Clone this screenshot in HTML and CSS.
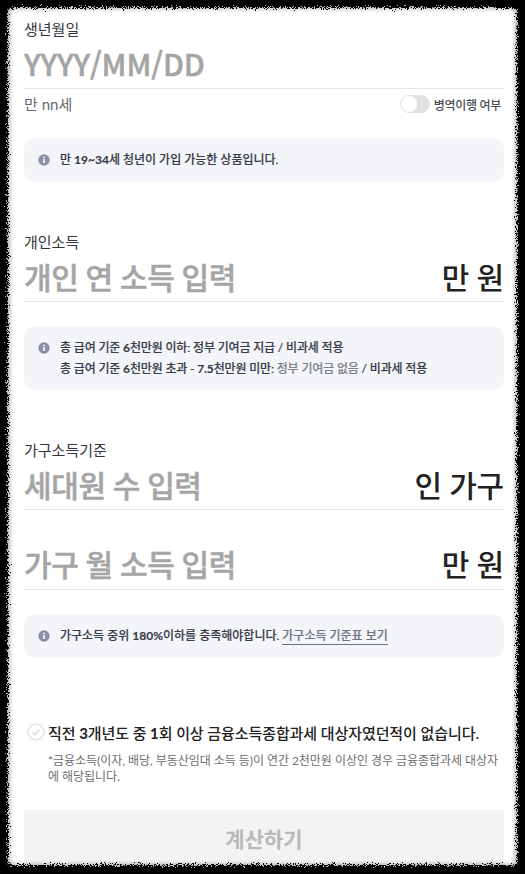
FILE: index.html
```html
<!DOCTYPE html>
<html lang="ko">
<head>
<meta charset="utf-8">
<title>계산하기</title>
<link rel="stylesheet" href="styles.css">
</head>
<body>
<main class="page">
  <section class="section section-birth">
    <div class="label">생년월일</div>
    <div class="field"><span class="placeholder latin">YYYY/MM/DD</span></div>
    <div class="age-row">
      <span class="age">만 nn세</span>
      <span class="toggle-wrap"><span class="toggle"><span class="knob"></span></span><span class="toggle-label">병역이행 여부</span></span>
    </div>
    <div class="info info-one">
      <svg class="info-icon" viewBox="0 0 12 12"><circle cx="6" cy="6" r="5.7" fill="#8b90a5"/><circle cx="6" cy="3.4" r="0.95" fill="#f3f5f9"/><rect x="5.1" y="5" width="1.8" height="4" fill="#f3f5f9"/></svg>
      <p class="info-text">만 <b class="num">19~34</b>세 청년이 가입 가능한 상품입니다.</p>
    </div>
  </section>

  <section class="section section-income">
    <div class="label">개인소득</div>
    <div class="field"><span class="placeholder">개인 연 소득 입력</span><span class="unit">만 원</span></div>
    <div class="info info-two">
      <svg class="info-icon" viewBox="0 0 12 12"><circle cx="6" cy="6" r="5.7" fill="#8b90a5"/><circle cx="6" cy="3.4" r="0.95" fill="#f3f5f9"/><rect x="5.1" y="5" width="1.8" height="4" fill="#f3f5f9"/></svg>
      <div class="info-text tight">
        <p>총 급여 기준 <b class="num">6</b>천만원 이하: 정부 기여금 지급 / 비과세 적용</p>
        <p>총 급여 기준 <b class="num">6</b>천만원 초과 - <b class="num">7.5</b>천만원 미만: <span class="muted">정부 기여금 없음</span> / 비과세 적용</p>
      </div>
    </div>
  </section>

  <section class="section section-house">
    <div class="label">가구소득기준</div>
    <div class="field"><span class="placeholder">세대원 수 입력</span><span class="unit">인 가구</span></div>
    <div class="field field-second"><span class="placeholder">가구 월 소득 입력</span><span class="unit">만 원</span></div>
    <div class="info info-three">
      <svg class="info-icon" viewBox="0 0 12 12"><circle cx="6" cy="6" r="5.7" fill="#8b90a5"/><circle cx="6" cy="3.4" r="0.95" fill="#f3f5f9"/><rect x="5.1" y="5" width="1.8" height="4" fill="#f3f5f9"/></svg>
      <p class="info-text">가구소득 중위 <b class="num">180%</b>이하를 충족해야합니다. <a class="link">가구소득 기준표 보기</a></p>
    </div>
  </section>

  <section class="agree">
    <div class="agree-row">
      <svg class="check" viewBox="0 0 18 18"><circle cx="9" cy="9" r="8" fill="#fff" stroke="#e6e6e6" stroke-width="1.6"/><path d="M5.4 9.2l2.6 2.6 4.6-5" fill="none" stroke="#dcdcdc" stroke-width="1.5"/></svg>
      <span class="agree-text">직전 <b class="num">3</b>개년도 중 <b class="num">1</b>회 이상 금융소득종합과세 대상자였던적이 없습니다.</span>
    </div>
    <p class="note">*금융소득(이자, 배당, 부동산임대 소득 등)이 연간 2천만원 이상인 경우 금융종합과세 대상자에 해당됩니다.</p>
  </section>

  <button class="submit" type="button">계산하기</button>
</main>

<svg class="frame" width="525" height="874" viewBox="0 0 525 874">
  <defs>
    <filter id="soft" x="-5%" y="-5%" width="110%" height="110%">
      <feGaussianBlur stdDeviation="2"/>
    </filter>
    <filter id="rough" x="-5%" y="-5%" width="110%" height="110%" color-interpolation-filters="sRGB">
      <feTurbulence type="fractalNoise" baseFrequency="1.1" numOctaves="2" seed="4" result="n"/>
      <feGaussianBlur in="SourceGraphic" stdDeviation="0.6" result="b"/>
      <feDisplacementMap in="b" in2="n" scale="11" xChannelSelector="R" yChannelSelector="G"/>
    </filter>
  </defs>
  <path filter="url(#soft)" opacity="0.3" fill-rule="evenodd" fill="#000" d="M-20-20H545V894H-20Z M14 9H511a4 4 0 0 1 4 4V860a4 4 0 0 1-4 4H14a4 4 0 0 1-4-4V13a4 4 0 0 1 4-4Z"/>
  <path filter="url(#rough)" fill-rule="evenodd" fill="#000" d="M-20-20H545V894H-20Z M13 8H513a4 4 0 0 1 4 4V861a4 4 0 0 1-4 4H12a4 4 0 0 1-4-4V12a4 4 0 0 1 5-4Z"/>
</svg>
</body>
</html>
```

FILE: styles.css
```css
* { box-sizing: border-box; }
html, body { margin: 0; padding: 0; background: #fff; }
body {
  width: 525px;
  height: 874px;
  overflow: hidden;
  position: relative;
  font-family: Lato, "Noto Sans CJK KR", sans-serif;
  color: #2b2b2b;
}
p { margin: 0; }
.page { padding: 19px 21px 0 24px; }
.section-income { margin-top: 51px; }
.section-house { margin-top: 51px; }
.label { font-size: 15px; line-height: 20px; color: #33363d; }
.field {
  display: flex;
  justify-content: space-between;
  align-items: center;
  height: 50px;
  padding-bottom: 1px;
  border-bottom: 1px solid #e6e6e8;
}
.field-second { margin-top: 30px; padding-bottom: 3px; }
.placeholder { font-size: 30px; font-weight: 500; color: #a5a5a5; letter-spacing: -0.4px; -webkit-text-stroke: 0.5px #a5a5a5; }
.latin { font-family: "Noto Sans CJK KR", sans-serif; font-size: 30px; letter-spacing: -0.1px; }
.unit { font-size: 30px; font-weight: 500; color: #222; letter-spacing: -0.2px; }
.age-row { display: flex; justify-content: space-between; align-items: center; height: 30px; }
.age { font-size: 15px; color: #66696f; padding-bottom: 2px; }
.toggle-wrap { display: flex; align-items: center; gap: 4px; }
.toggle { display: block; width: 30px; height: 18px; border-radius: 9px; background: #e2e2e2; position: relative; padding: 1px; }
.knob { display: block; width: 16px; height: 16px; border-radius: 50%; background: #fff; }
.toggle-label { font-size: 12px; font-weight: 500; color: #4a4d57; margin-right: 3px; letter-spacing: -0.3px; }
.info {
  display: flex;
  align-items: flex-start;
  gap: 10px;
  background: #f3f5f9;
  border-radius: 10px;
  padding: 10px 14px;
  font-size: 12px;
  line-height: 21px;
  font-weight: 500;
  color: #393c4b;
  -webkit-text-stroke: 0.15px;
}
.info-one { margin-top: 20px; height: 42px; }
.info-two { margin-top: 25px; height: 62px; }
.info-three { margin-top: 25px; height: 42px; }
.info-icon { width: 12px; height: 12px; flex: none; margin-top: 5px; }
.tight { letter-spacing: -0.15px; }
.num { font-weight: 700; }
.muted { color: #7f8291; }
.link { color: #6f7386; border-bottom: 1px solid #6f7386; padding-bottom: 1px; }
.agree { margin-top: 64px; }
.agree-row { display: flex; align-items: center; gap: 3px; padding-left: 3px; height: 22px; }
.check { width: 18px; height: 18px; flex: none; }
.agree-text { font-size: 15px; font-weight: 500; color: #222; white-space: nowrap; letter-spacing: -0.08px; }
.note { margin-top: 10px; padding-left: 24px; font-size: 12px; line-height: 16px; color: #6e6e6e; letter-spacing: -0.04px; }
.submit {
  display: block;
  width: 480px;
  height: 56px;
  margin-top: 25px;
  border: 0;
  background: #f3f3f3;
  font-family: inherit;
  font-size: 21px;
  font-weight: 700;
  color: #b8b8b8;
}
.frame { position: absolute; left: 0; top: 0; pointer-events: none; }
```
